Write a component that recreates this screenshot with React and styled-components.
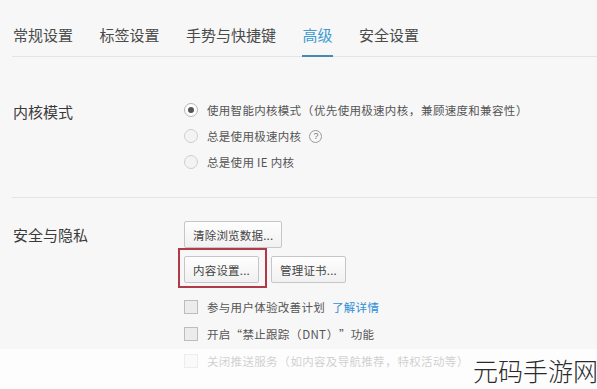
import React from "react";
import styled, { createGlobalStyle } from "styled-components";

const Global = createGlobalStyle`
  html, body { margin: 0; padding: 0; }
  body {
    background: #f7f7f7;
    font-family: "Noto Sans CJK SC", "Noto Sans", sans-serif;
    width: 597px;
    height: 389px;
    overflow: hidden;
  }
`;

const Page = styled.div`
  position: relative;
  width: 597px;
  height: 389px;
  overflow: hidden;
  background: #f7f7f7;
`;

const TabBar = styled.div`
  display: flex;
  gap: 25.5px;
  margin-left: 12px;
  border-bottom: 1px solid #e4e4e4;
`;

const Tab = styled.div`
  font-size: 15px;
  line-height: 22px;
  padding: 24px 0 9px 1px;
  color: ${(p) => (p.$active ? "#3d9ad2" : "#4a4a4a")};
  border-bottom: 2px solid ${(p) => (p.$active ? "#4a88b3" : "transparent")};
  margin-bottom: -1px;
`;

const Section = styled.div`
  display: grid;
  grid-template-columns: 172px 1fr;
  padding: ${(p) => p.$pad};
  margin-left: 12px;
  border-bottom: ${(p) => (p.$divider ? "1px solid #e4e4e4" : "none")};
`;

const Label = styled.div`
  font-size: 15px;
  color: #3a3a3a;
  line-height: 26px;
  padding: ${(p) => p.$top}px 0 0 1px;
`;

const Options = styled.div`
  display: flex;
  flex-direction: column;
`;

const Row = styled.div`
  display: flex;
  align-items: center;
  height: ${(p) => p.$h || 26}px;
  font-size: 11.5px;
  letter-spacing: 0.3px;
  color: #555;
  white-space: nowrap;
`;

const Punct = styled.span`
  display: inline-block;
  width: 1.1em;
  text-align: center;
`;

const Radio = styled.span`
  box-sizing: border-box;
  width: 14px;
  height: 14px;
  border-radius: 50%;
  border: 1px solid ${(p) => (p.$checked ? "#b5b5b5" : "#cfcfcf")};
  background: ${(p) => (p.$checked ? "#fff" : "#f3f3f3")};
  margin-right: 9px;
  display: flex;
  align-items: center;
  justify-content: center;
  flex-shrink: 0;
  &::after {
    content: "";
    width: 6px;
    height: 6px;
    border-radius: 50%;
    background: ${(p) => (p.$checked ? "#555" : "transparent")};
  }
`;

const Help = styled.span`
  box-sizing: border-box;
  width: 13px;
  height: 13px;
  border-radius: 50%;
  border: 1px solid #999;
  margin-left: 8px;
  font-size: 9px;
  line-height: 11px;
  text-align: center;
  color: #777;
  font-family: "Liberation Sans", sans-serif;
  letter-spacing: 0;
`;

const ButtonRow = styled.div`
  display: flex;
  gap: 12px;
  margin-bottom: 8px;
`;

const Button = styled.div`
  box-sizing: border-box;
  height: 27px;
  padding: 0 8px;
  display: flex;
  align-items: center;
  font-size: 11.5px;
  letter-spacing: 0.2px;
  color: #444;
  border: 1px solid #c6c6c6;
  border-radius: 2px;
  background: linear-gradient(#fefefe, #f1f1f1);
  white-space: nowrap;
`;

const Highlight = styled.div`
  position: relative;
  display: flex;
  &::after {
    content: "";
    position: absolute;
    top: -8px;
    left: -6px;
    right: -8px;
    bottom: -5px;
    border: 2px solid #b03a47;
    pointer-events: none;
  }
`;

const Checks = styled.div`
  display: flex;
  flex-direction: column;
  margin-top: 2px;
`;

const Checkbox = styled.span`
  box-sizing: border-box;
  width: 14px;
  height: 14px;
  border: 1px solid #bdbdbd;
  background: #ececec;
  margin-right: 9px;
  flex-shrink: 0;
`;

const Link = styled.span`
  color: #2f8fd8;
  margin-left: 7px;
`;

const Fade = styled.div`
  position: absolute;
  left: 0;
  right: 0;
  top: 349px;
  bottom: 0;
  background: rgba(255, 255, 255, 0.72);
  display: flex;
  align-items: center;
  justify-content: flex-end;
`;

const Watermark = styled.div`
  font-size: 25px;
  font-weight: 300;
  color: #2a2a2a;
  white-space: nowrap;
  margin-right: -1px;
  margin-top: 2px;
`;

const tabs = ["常规设置", "标签设置", "手势与快捷键", "高级", "安全设置"];

export default function App() {
  return (
    <Page>
      <Global />
      <TabBar>
        {tabs.map((t) => (
          <Tab key={t} $active={t === "高级"}>
            {t}
          </Tab>
        ))}
      </TabBar>

      <Section $pad="40px 0 22px" $divider>
        <Label $top={2}>内核模式</Label>
        <Options>
          <Row>
            <Radio $checked />
            <span>
              使用智能内核模式<Punct>（</Punct>优先使用极速内核<Punct>，</Punct>兼顾速度和兼容性<Punct>）</Punct>
            </span>
          </Row>
          <Row>
            <Radio />
            总是使用极速内核
            <Help>?</Help>
          </Row>
          <Row>
            <Radio />
            总是使用 IE 内核
          </Row>
        </Options>
      </Section>

      <Section $pad="23px 0 0">
        <Label $top={1}>安全与隐私</Label>
        <Options>
          <ButtonRow>
            <Button>清除浏览数据...</Button>
          </ButtonRow>
          <ButtonRow>
            <Highlight>
              <Button>内容设置...</Button>
            </Highlight>
            <Button>管理证书...</Button>
          </ButtonRow>
          <Checks>
            <Row $h={27}>
              <Checkbox />
              参与用户体验改善计划
              <Link>了解详情</Link>
            </Row>
            <Row $h={27}>
              <Checkbox />
              <span>
                开启“禁止跟踪<Punct>（</Punct>DNT<Punct>）</Punct>”功能
              </span>
            </Row>
            <Row $h={27}>
              <Checkbox />
              <span>
                关闭推送服务<Punct>（</Punct>如内容及导航推荐<Punct>，</Punct>特权活动等<Punct>）</Punct>
              </span>
            </Row>
          </Checks>
        </Options>
      </Section>

      <Fade>
        <Watermark>元码手游网</Watermark>
      </Fade>
    </Page>
  );
}
